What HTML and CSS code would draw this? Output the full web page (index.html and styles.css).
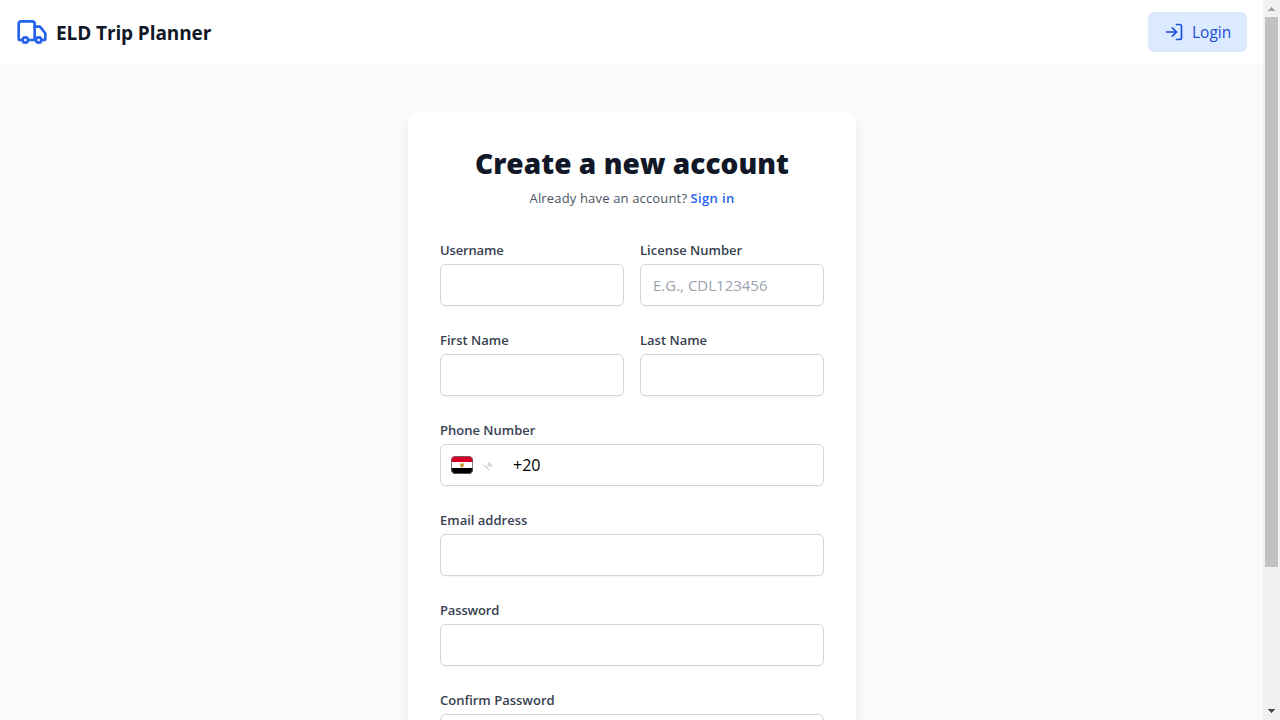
FILE: index.html
```html
<!DOCTYPE html>
<html lang="en">
<head>
<meta charset="utf-8">
<title>ELD Trip Planner</title>
<link rel="stylesheet" href="styles.css">
</head>
<body>
<div class="page">
  <header class="header">
    <div class="brand">
      <svg class="truck" viewBox="0 0 24 24"><path d="M14 18V6a2 2 0 0 0-2-2H4a2 2 0 0 0-2 2v11a1 1 0 0 0 1 1h2"/><path d="M15 18H9"/><path d="M19 18h2a1 1 0 0 0 1-1v-3.65a1 1 0 0 0-.22-.624l-3.48-4.35A1 1 0 0 0 17.52 8H14"/><circle cx="17" cy="18" r="2"/><circle cx="7" cy="18" r="2"/></svg>
      <span class="brand-name">ELD Trip Planner</span>
    </div>
    <button class="login" type="button">
      <svg class="login-icon" viewBox="0 0 24 24"><path d="M15 3h4a2 2 0 0 1 2 2v14a2 2 0 0 1-2 2h-4"/><path d="M10 17l5-5-5-5"/><path d="M15 12H3"/></svg>
      <span class="login-text">Login</span>
    </button>
  </header>
  <main class="main">
    <form class="card">
      <h1 class="title">Create a new account</h1>
      <p class="subtitle"><span class="already">Already have an account?</span> <a class="signin">Sign in</a></p>
      <div class="fields">
        <label class="field"><span class="label tight">Username</span><input class="input"></label>
        <label class="field"><span class="label">License Number</span><input class="input" placeholder="E.G., CDL123456"></label>
        <label class="field"><span class="label">First Name</span><input class="input"></label>
        <label class="field"><span class="label">Last Name</span><input class="input"></label>
        <div class="field wide"><span class="label">Phone Number</span>
          <div class="input phone">
            <svg class="flag" viewBox="0 0 22 18"><clipPath id="round"><rect width="22" height="18" rx="4.500"/></clipPath><g clip-path="url(#round)"><path fill="#fff" d="M0 0h22v18H0z"/><path fill="#d80027" d="M0 0h22v6H0z"/><path fill="#000" d="M0 12h22v6H0z"/><path fill="#c8962a" d="M9 7.300l2 .4 2-.4-.4 2.700-1 1.500h-1.200l-1-1.500z"/></g><rect x=".5" y=".5" width="21" height="17" rx="4" fill="none" stroke="#666" stroke-opacity=".8"/></svg>
            <svg class="arrow" viewBox="0 0 12 12"><path fill="#d3d5d9" d="M5.700 2l5.800 5.500H3.800l1.900-1z"/><path fill="none" stroke="#b4b6ba" d="M1.700 6l5.600 5.200"/></svg>
            <span class="dial">+20</span>
          </div>
        </div>
        <label class="field wide"><span class="label">Email address</span><input class="input"></label>
        <label class="field wide"><span class="label tight">Password</span><input class="input"></label>
        <label class="field wide"><span class="label">Confirm Password</span><input class="input"></label>
      </div>
    </form>
  </main>
</div>
<div class="scrollbar">
  <svg class="sb-arrow" viewBox="0 0 17 17"><path fill="#a3a3a3" d="M5 11h7v-1h-1V9h-1V8H9V7H8v1H7v1H6v1H5z"/></svg>
  <div class="thumb"></div>
  <svg class="sb-arrow" viewBox="0 0 17 17"><path fill="#505050" d="M5 6h7v1h-1v1h-1v1H9v1H8V9H7V8H6V7H5z"/></svg>
</div>
</body>
</html>
```
FILE: styles.css
```css
* { box-sizing: border-box; }
body {
  margin: 0; height: 720px; overflow: hidden; display: flex;
  font-family: "Open Sans", "Noto Sans", sans-serif; color: #111827; background: #f9fafb;
}
.page { flex: 1; height: 720px; overflow: hidden; display: flex; flex-direction: column; background: #f8fafc; }
.header { height: 64px; flex: none; background: #fff; display: flex; align-items: center; justify-content: space-between; padding: 0 16px; }
.brand { display: flex; align-items: center; gap: 8px; }
.truck { width: 32px; height: 32px; }
.truck, .login-icon { fill: none; stroke-width: 2; stroke-linecap: round; stroke-linejoin: round; }
.truck { stroke: #2563eb; }
.brand-name { font-size: 19px; line-height: 28px; font-weight: 700; letter-spacing: -.1px; white-space: nowrap; padding-top: 1px; }
.login { width: 99px; height: 40px; border: 0; border-radius: 6px; background: #dbeafe; color: #1d4ed8; display: flex; align-items: center; gap: 8px; padding: 0 16px; font-family: inherit; font-size: 15.5px; line-height: 24px; }
.login-icon { width: 20px; height: 20px; stroke: #1d4ed8; flex: none; }
.main { flex: none; display: flex; justify-content: center; padding-top: 48px; padding-left: 1px; }
.card { width: 448px; height: 760px; padding: 32px; background: #fff; border-radius: 8px; box-shadow: 0 10px 15px -3px rgba(0,0,0,.1), 0 4px 6px -4px rgba(0,0,0,.1); }
.title { margin: 0; font-size: 28px; line-height: 38px; padding-bottom: 2px; letter-spacing: .06px; font-weight: 800; text-align: center; white-space: nowrap; }
.subtitle { margin: 4px 0 0; font-size: 13px; line-height: 20px; text-align: center; color: #4b5563; white-space: nowrap; }
.already { letter-spacing: .16px; }
.signin { color: #2563eb; font-weight: 600; letter-spacing: .35px; }
.fields { margin-top: 32px; display: grid; grid-template-columns: 1fr 1fr; gap: 24px 16px; }
.field { display: flex; flex-direction: column; gap: 4px; min-width: 0; }
.wide { grid-column: span 2; }
.label { font-size: 13px; line-height: 20px; font-weight: 600; color: #374151; white-space: nowrap; align-self: flex-start; }
.tight { letter-spacing: -.16px; }
.input { width: 100%; height: 42px; border: 1px solid #d1d5db; border-radius: 6px; background: #fff; padding: 0 12px; font-family: inherit; font-size: 15px; color: #000; box-shadow: 0 1px 2px rgba(0,0,0,.05); outline: 0; }
.input::placeholder { color: #9ca3af; opacity: 1; }
.phone { display: flex; align-items: center; padding: 0 10px; }
.flag { width: 22px; height: 18px; }
.arrow { width: 12px; height: 12px; margin-left: 9px; }
.dial { margin-left: 19px; font-size: 16px; }
.scrollbar { width: 17px; height: 720px; background: #f1f1f1; display: flex; flex-direction: column; align-items: center; justify-content: flex-start; }
.sb-arrow { width: 17px; height: 17px; flex: none; }
.thumb { width: 13px; height: 550px; margin-bottom: auto; background: #c1c1c1; }
```
